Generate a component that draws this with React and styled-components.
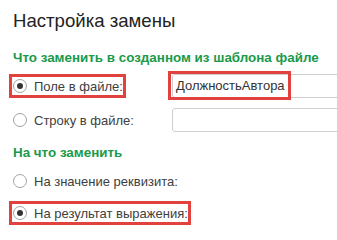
import React from "react";
import styled, { createGlobalStyle } from "styled-components";

const GlobalStyle = createGlobalStyle`
  html,
  body {
    margin: 0;
    background: #ffffff;
    overflow: hidden;
  }

  body {
    font-family: "Liberation Sans", Arial, sans-serif;
  }
`;

const App = () => (
  <>
    <GlobalStyle />
    <Page>
      <Title>Настройка замены</Title>

      <GroupTitle $first>Что заменить в созданном из шаблона файле</GroupTitle>
      <Rows $gap={10}>
        <Row>
          <Option $marked>
            <Radio $checked />
            Поле в файле:
          </Option>
          <Field>
            <MarkedValue>ДолжностьАвтора</MarkedValue>
          </Field>
        </Row>
        <Row>
          <Option>
            <Radio />
            Строку в файле:
          </Option>
          <Field />
        </Row>
      </Rows>

      <GroupTitle>На что заменить</GroupTitle>
      <Rows $gap={8}>
        <Row>
          <Option>
            <Radio />
            На значение реквизита:
          </Option>
        </Row>
        <Row>
          <Option $marked>
            <Radio $checked />
            На результат выражения:
          </Option>
        </Row>
      </Rows>
    </Page>
  </>
);

const Page = styled.div`
  box-sizing: border-box;
  width: 337px;
  padding: 10px 0 0 13px;
`;

const Title = styled.h1`
  margin: 0;

  font-size: 18.6px;
  line-height: 22px;
  font-weight: normal;
  color: #222222;
`;

const GroupTitle = styled.h2`
  margin: ${(p) => (p.$first ? "18px" : "13px")} 0 8px;

  font-size: 13.4px;
  line-height: 16px;
  font-weight: bold;
  color: #1a9a4a;
`;

const Rows = styled.div`
  display: grid;
  row-gap: ${(p) => p.$gap}px;
`;

const Row = styled.div`
  display: grid;
  grid-template-columns: 159px 1fr;
  align-items: center;
  height: 24px;
`;

const Option = styled.label`
  display: inline-flex;
  align-items: center;
  gap: 7px;
  justify-self: start;
  height: 18px;
  margin-left: -1px;
  padding: 0 0 0 1px;

  font-size: 13px;
  color: #404040;
  white-space: nowrap;

  outline: ${(p) => (p.$marked ? "3px solid #e2423d" : "none")};
`;

const Radio = styled.span`
  box-sizing: border-box;
  display: flex;
  align-items: center;
  justify-content: center;
  flex: none;
  width: 14px;
  height: 14px;

  background: #ffffff;
  border: 1px solid #a3a3a3;
  border-radius: 50%;

  &::after {
    content: "";
    display: ${(p) => (p.$checked ? "block" : "none")};
    width: 6px;
    height: 6px;

    background: #333333;
    border-radius: 50%;
  }
`;

const Field = styled.div`
  box-sizing: border-box;
  display: flex;
  align-items: stretch;
  height: 24px;
  margin-right: -6px;
  padding-left: 3px;

  font-size: 13px;
  color: #333333;

  background: #ffffff;
  border: 1px solid #cfcfcf;
  border-radius: 3px;
`;

const MarkedValue = styled.span`
  display: flex;
  align-items: center;
  margin: -1px 0 0 -5px;
  padding: 0 3px 0 5px;

  outline: 3px solid #e2423d;
`;

export default App;
